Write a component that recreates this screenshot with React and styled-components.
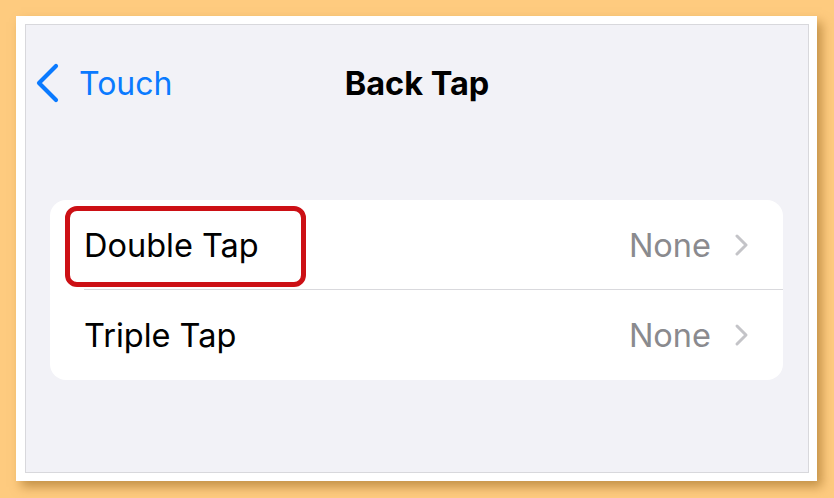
import React from 'react'
import styled, { createGlobalStyle } from 'styled-components'

const Global = createGlobalStyle`
  html, body { margin: 0; padding: 0; background: #fecb7f; }
  body { font-family: Inter, "Noto Sans", sans-serif; }
`

const Page = styled.div`
  width: 834px;
  height: 498px;
  padding: 16px 0 0 16px;
  box-sizing: border-box;
`

const Frame = styled.div`
  width: 801px;
  height: 465px;
  box-sizing: border-box;
  background: #fff;
  padding: 8px 8px 8px 9px;
  box-shadow: 5px 6px 10px rgba(150, 100, 30, 0.55);
`

const Screen = styled.div`
  height: 100%;
  box-sizing: border-box;
  border: 1px solid #d8d8dc;
  background: #f2f2f7;
  display: flex;
  flex-direction: column;
`

const NavBar = styled.div`
  position: relative;
  height: 116px;
  display: flex;
  align-items: center;
  justify-content: center;
`

const Back = styled.div`
  position: absolute;
  left: 9px;
  top: 0;
  bottom: 0;
  display: flex;
  align-items: center;
  gap: 18px;
  color: #0a7aff;
  font-size: 32px;
`

const Title = styled.div`
  font-size: 32.5px;
  font-weight: 700;
  color: #000;
`

const Card = styled.div`
  position: relative;
  margin: 59px 25px 0 24px;
  background: #fff;
  border-radius: 16px;
`

const Row = styled.div`
  height: 90px;
  display: flex;
  align-items: center;
  padding: 0 33px 0 34px;
  position: relative;
  ${p => p.$divider && `
    &::after {
      content: '';
      position: absolute;
      left: 34px;
      right: 0;
      bottom: 0;
      height: 1px;
      background: #d9d9dd;
    }
  `}
`

const Label = styled.div`
  flex: 1;
  font-size: 32.5px;
  color: #000;
`

const Value = styled.div`
  font-size: 32.5px;
  color: #8a8a8e;
  margin-right: 23px;
`

const Highlight = styled.div`
  position: absolute;
  left: 15px;
  top: 6px;
  width: 241px;
  height: 81px;
  box-sizing: border-box;
  border: 5px solid #cc1015;
  border-radius: 12px;
`

const BackChevron = () => (
  <svg width="26" height="40" viewBox="0 0 26 40">
    <path d="M21 3 L4 20 L21 37" fill="none" stroke="#0a7aff" strokeWidth="4.2" strokeLinecap="round" strokeLinejoin="round" />
  </svg>
)

const Disclosure = () => (
  <svg width="16" height="24" viewBox="0 0 16 24">
    <path d="M3 3 L12 12 L3 21" fill="none" stroke="#c4c4c8" strokeWidth="3" strokeLinecap="round" strokeLinejoin="round" />
  </svg>
)

const rows = [
  { label: 'Double Tap', value: 'None' },
  { label: 'Triple Tap', value: 'None' },
]

export default function App() {
  return (
    <Page>
      <Global />
      <Frame>
        <Screen>
          <NavBar>
            <Back>
              <BackChevron />
              <span>Touch</span>
            </Back>
            <Title>Back Tap</Title>
          </NavBar>
          <Card>
            {rows.map((r, i) => (
              <Row key={r.label} $divider={i < rows.length - 1}>
                <Label>{r.label}</Label>
                <Value>{r.value}</Value>
                <Disclosure />
              </Row>
            ))}
            <Highlight />
          </Card>
        </Screen>
      </Frame>
    </Page>
  )
}
